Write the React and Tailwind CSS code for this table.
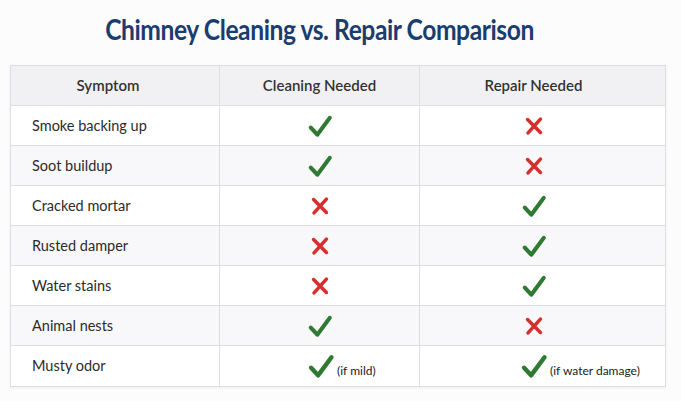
const rows = [
    { symptom: "Smoke backing up", cleaning: true, repair: false },
    { symptom: "Soot buildup", cleaning: true, repair: false },
    { symptom: "Cracked mortar", cleaning: false, repair: true },
    { symptom: "Rusted damper", cleaning: false, repair: true },
    { symptom: "Water stains", cleaning: false, repair: true },
    { symptom: "Animal nests", cleaning: true, repair: false },
    { symptom: "Musty odor", cleaning: true, repair: true, cleaningNote: "(if mild)", repairNote: "(if water damage)" },
];

function Check({ big }) {
    return (
        <svg viewBox="0 0 24 24" className={big ? "w-[28px] h-[28px]" : "w-[26px] h-[26px]"} aria-hidden="true">
            <path d="M3.5 13.5 L9.5 20 L21 4.5" fill="none" stroke="#2e7a32" strokeWidth="3.8" strokeLinecap="round" strokeLinejoin="round" />
        </svg>
    );
}

function Cross() {
    return (
        <svg viewBox="0 0 24 24" className="w-[22px] h-[22px]" aria-hidden="true">
            <path d="M5 5 L19 19 M19 4.5 L5.5 19.5" fill="none" stroke="#d3312f" strokeWidth="3.9" strokeLinecap="round" />
        </svg>
    );
}

function Mark({ ok, note }) {
    if (!ok) return <Cross />;
    if (!note) return <Check />;
    return (
        <span className="flex items-end gap-[2px]">
            <Check big />
            <span className="text-[12px] text-[#222] leading-none mb-[3px]">{note}</span>
        </span>
    );
}

export default function App() {
    return (
        <div className="w-[681px] h-[401px] bg-[#fcfcfc] font-['Lato','Liberation_Sans',sans-serif] text-[#2b2b2b] overflow-hidden">
            <div className="pt-[9px] h-[65px] flex justify-center pr-[42px]">
                <h1 className="inline-block scale-x-[0.88] text-[28px] font-bold text-[#1b3d6e] tracking-[-0.5px] leading-[40px]">
                    Chimney Cleaning vs. Repair Comparison
                </h1>
            </div>

            <div className="ml-[10px] w-[656px] border border-[#dedee2] bg-white shadow-[0_1px_3px_rgba(0,0,0,0.06)]">
                <div className="grid grid-cols-[209px_200px_1fr] h-[40px] bg-[#f1f1f3] border-b border-[#dedee2] text-[15px] font-semibold text-[#333]">
                    <div className="flex items-center justify-center pr-[14px] border-r border-[#dedee2]">Symptom</div>
                    <div className="flex items-center justify-center border-r border-[#dedee2]">Cleaning Needed</div>
                    <div className="flex items-center justify-center pr-[18px]">Repair Needed</div>
                </div>

                {rows.map((row, index) => (
                    <div
                        key={row.symptom}
                        className={`grid grid-cols-[209px_200px_1fr] h-[40px] text-[14.5px] ${index % 2 === 1 ? "bg-[#f8f8fa]" : "bg-white"} ${index < rows.length - 1 ? "border-b border-[#dedee2]" : ""}`}
                    >
                        <div className="flex items-center pl-[21px] border-r border-[#dedee2]">{row.symptom}</div>
                        <div className={`flex items-center border-r border-[#dedee2] ${row.cleaningNote ? "pl-[87px]" : "justify-center"}`}>
                            <Mark ok={row.cleaning} note={row.cleaningNote} />
                        </div>
                        <div className={`flex items-center ${row.repairNote ? "pl-[100px]" : "justify-center pr-[18px]"}`}>
                            <Mark ok={row.repair} note={row.repairNote} />
                        </div>
                    </div>
                ))}
            </div>
        </div>
    );
}
